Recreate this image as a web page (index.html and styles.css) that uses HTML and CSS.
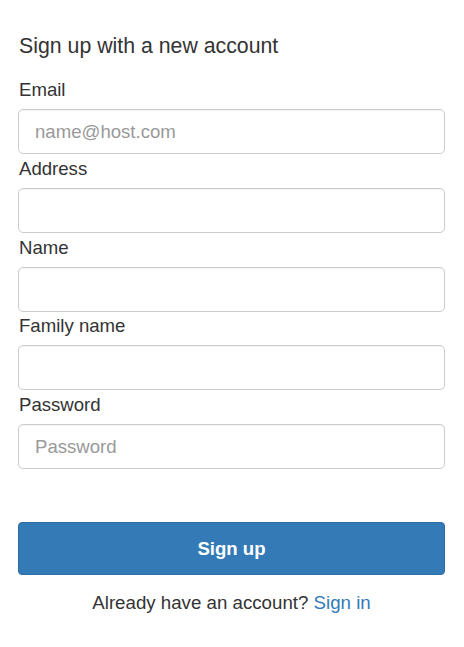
FILE: index.html
```html
<!DOCTYPE html>
<html lang="en">
<head>
<meta charset="utf-8">
<title>Sign up</title>
<link rel="stylesheet" href="styles.css">
</head>
<body>
<form class="signup">
  <h1 class="title">Sign up with a new account</h1>
  <label class="label" for="email">Email</label>
  <input class="field" id="email" type="email" placeholder="name@host.com">
  <label class="label" for="address">Address</label>
  <input class="field" id="address" type="text">
  <label class="label" for="name">Name</label>
  <input class="field" id="name" type="text">
  <label class="label" for="family">Family name</label>
  <input class="field" id="family" type="text">
  <label class="label" for="password">Password</label>
  <input class="field" id="password" type="password" placeholder="Password">
  <button class="submit" type="button">Sign up</button>
  <p class="alt">Already have an account? <a class="link" href="#">Sign in</a></p>
</form>
</body>
</html>
```
FILE: styles.css
```css
html, body {
  margin: 0;
  padding: 0;
  background: #fff;
}
body {
  font-family: "Liberation Sans", Arial, sans-serif;
  color: #333;
}
.signup {
  display: flex;
  flex-direction: column;
  width: 427px;
  padding: 34px 0 0 18px;
}
.title {
  margin: 0 0 18px 1px;
  font-size: 21.3px;
  font-weight: normal;
  line-height: 25px;
}
.label {
  display: block;
  font-size: 18.6px;
  line-height: 26px;
  margin: 1.75px 0 6px 1px;
}
.title + .label {
  margin-top: 0;
}
.field {
  box-sizing: border-box;
  height: 45px;
  width: 100%;
  margin: 0;
  padding: 0 16px;
  border: 1px solid #ccc;
  border-radius: 5px;
  font-family: inherit;
  font-size: 18.6px;
  color: #555;
  background: #fff;
  box-shadow: inset 0 1px 1px rgba(0,0,0,0.04);
}
.field::placeholder {
  color: #999;
}
.submit {
  margin-top: 53px;
  height: 53px;
  width: 100%;
  border: 1px solid #2e6da4;
  border-radius: 4px;
  background: #337ab7;
  color: #fff;
  font-family: inherit;
  font-size: 18.6px;
  font-weight: bold;
}
.alt {
  margin: 15px 0 0;
  text-align: center;
  font-size: 18.7px;
  line-height: 26px;
}
.link {
  color: #337ab7;
  text-decoration: none;
}
```
